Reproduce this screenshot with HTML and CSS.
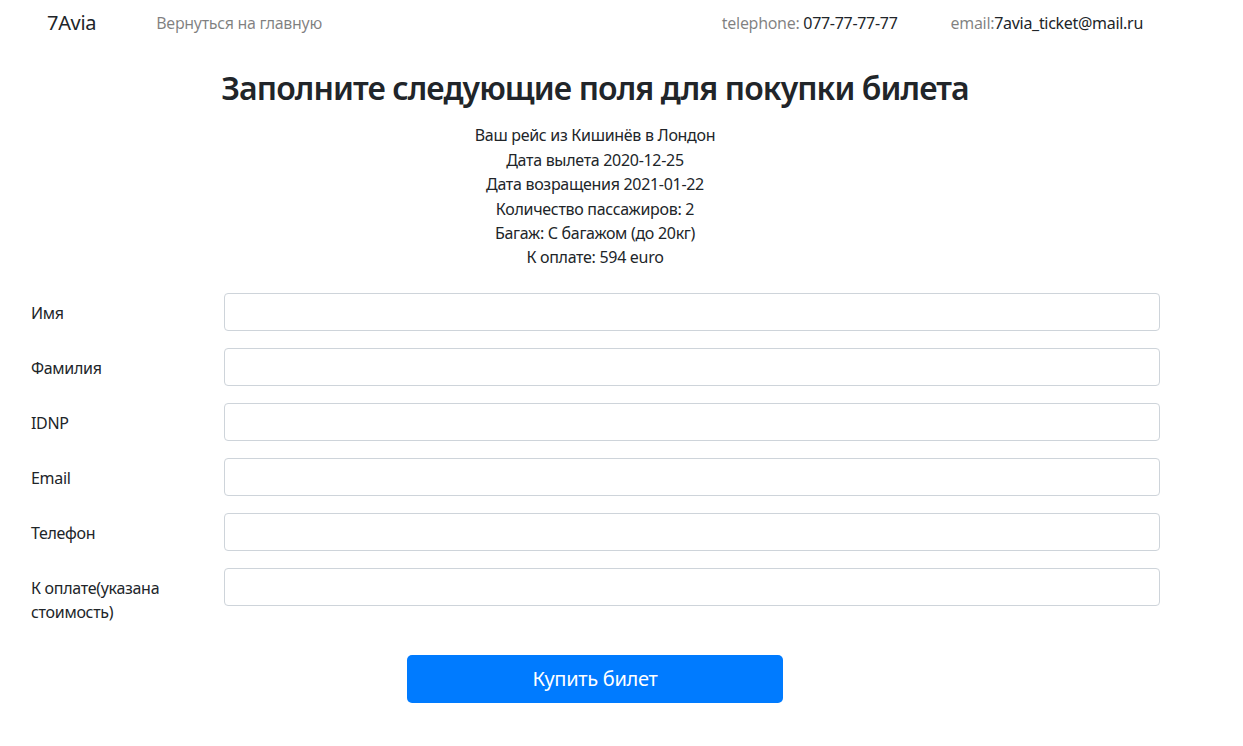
FILE: index.html
```html
<!DOCTYPE html>
<html lang="ru">
<head>
<meta charset="utf-8">
<title>7Avia</title>
<link rel="stylesheet" href="styles.css">
</head>
<body>
<nav class="navbar">
  <a class="brand" href="#">7Avia</a>
  <a class="nav-link back" href="#">Вернуться на главную</a>
  <span class="nav-link phone">telephone: <span class="dark">077-77-77-77</span></span>
  <span class="nav-link mail">email:<span class="dark">7avia_ticket@mail.ru</span></span>
</nav>
<main class="page">
  <h1 class="title">Заполните следующие поля для покупки билета</h1>
  <div class="info">
    <p>Ваш рейс из Кишинёв в Лондон</p>
    <p>Дата вылета 2020-12-25</p>
    <p>Дата возращения 2021-01-22</p>
    <p>Количество пассажиров: 2</p>
    <p>Багаж: С багажом (до 20кг)</p>
    <p>К оплате: 594 euro</p>
  </div>
  <form class="form">
    <div class="row"><label class="label">Имя</label><input class="input" type="text"></div>
    <div class="row"><label class="label">Фамилия</label><input class="input" type="text"></div>
    <div class="row"><label class="label">IDNP</label><input class="input" type="text"></div>
    <div class="row"><label class="label">Email</label><input class="input" type="text"></div>
    <div class="row"><label class="label">Телефон</label><input class="input" type="text"></div>
    <div class="row"><label class="label">К оплате(указана стоимость)</label><input class="input" type="text"></div>
    <div class="actions"><button class="btn" type="button">Купить билет</button></div>
  </form>
</main>
</body>
</html>
```
FILE: styles.css
```css
* { box-sizing: border-box; }
body {
  margin: 0;
  font-family: "Noto Sans", "Open Sans", sans-serif;
  font-size: 16px;
  line-height: 1.5;
  letter-spacing: -0.3px;
  color: #212529;
  background: #fff;
}
.navbar {
  display: flex;
  align-items: center;
  height: 45px;
  padding: 0 0 0 47px;
}
.brand {
  font-size: 20px;
  color: #212529;
  text-decoration: none;
  margin-right: 60px;
}
.nav-link {
  color: rgba(0,0,0,.5);
  text-decoration: none;
}
.back { margin-right: auto; }
.phone { margin-right: 53px; }
.mail { margin-right: 100px; }
.dark { color: #212529; }
.page {
  width: 1190px;
}
.title {
  margin: 24px 0 0;
  text-align: center;
  font-size: 32px;
  font-weight: 600;
  line-height: 1.2;
  letter-spacing: -0.9px;
}
.info {
  margin-top: 16px;
  text-align: center;
}
.info p { margin: 0; line-height: 24.4px; }
.form {
  margin-top: 23px;
  padding-left: 31px;
}
.row {
  display: flex;
  align-items: flex-start;
  margin-bottom: 17px;
}
.label {
  width: 193px;
  padding-right: 40px;
  padding-top: 8px;
}
.input {
  width: 936px;
  height: 38px;
  border: 1px solid #ced4da;
  border-radius: 4px;
  background: #fff;
}
.actions {
  display: flex;
  justify-content: center;
  padding-right: 31px;
  margin-top: 31px;
}
.btn {
  width: 376px;
  height: 48px;
  background: #007bff;
  color: #fff;
  border: 0;
  border-radius: 5px;
  font-family: inherit;
  font-size: 20px;
  letter-spacing: -0.3px;
}
```
